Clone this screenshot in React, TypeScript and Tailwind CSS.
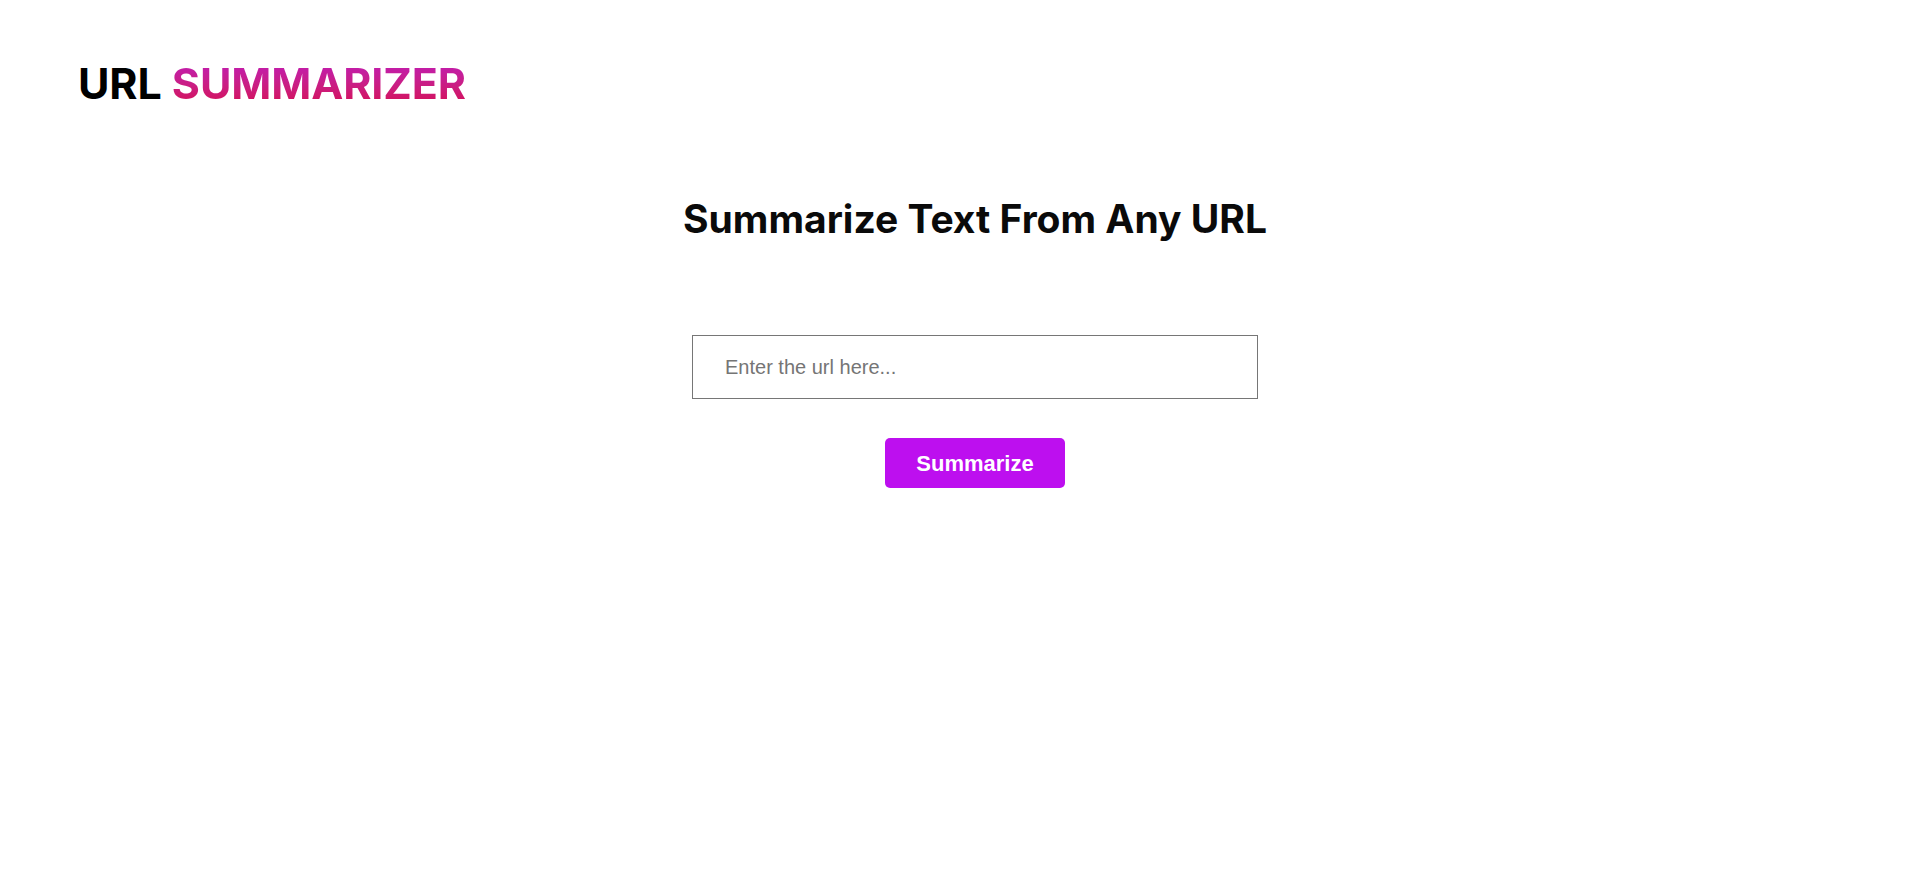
import React, { useState } from 'react';

const App: React.FC = () => {
  const [url, setUrl] = useState('');

  return (
    <div className="min-h-screen w-full bg-white" style={{ fontFamily: 'Inter, "Liberation Sans", sans-serif' }}>
      <header className="px-[78px] pt-[58px]">
        <h1 className="text-[43px] font-bold leading-[50px] tracking-[-0.1px] text-black">
          URL{' '}
          <span className="bg-gradient-to-b from-[#be14bc] to-[#d6004c] bg-clip-text text-transparent">
            SUMMARIZER
          </span>
        </h1>
      </header>

      <main className="flex flex-col items-center pl-[30px] pt-[87px]">
        <h2 className="text-[39px] font-bold leading-[48px] text-[#0a0a0a]">
          Summarize Text From Any URL
        </h2>

        <input
          type="text"
          value={url}
          onChange={(e) => setUrl(e.target.value)}
          placeholder="Enter the url here..."
          className="mt-[92px] h-[64px] w-[566px] border border-[#767676] px-[32px] text-[20px] text-black placeholder:text-[#757575] outline-none"
          style={{ fontFamily: '"Liberation Sans", Arial, sans-serif' }}
        />

        <button
          className="mt-[39px] h-[50px] w-[180px] rounded-[5px] bg-[#bd0fef] text-[22px] font-bold text-white"
          style={{ fontFamily: '"Liberation Sans", Arial, sans-serif' }}
        >
          Summarize
        </button>
      </main>
    </div>
  );
};

export default App;
